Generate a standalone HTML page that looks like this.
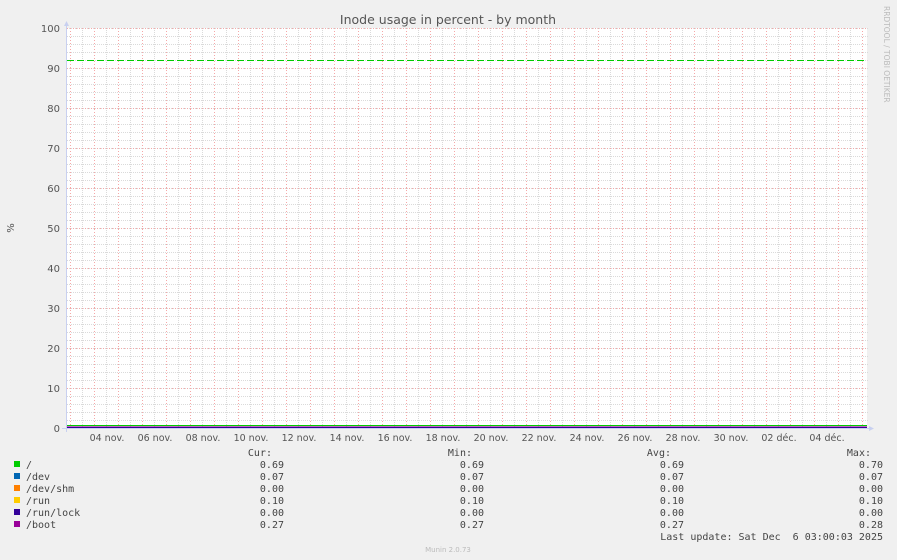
<!DOCTYPE html>
<html><head><style>
html,body{margin:0;padding:0;background:#f0f0f0;}
svg{display:block}
text{font-family:"DejaVu Sans","Liberation Sans",sans-serif;}
.m text, text.m{font-family:"DejaVu Sans Mono","Liberation Mono",monospace;font-size:10px;fill:#444;}
</style></head><body>
<svg width="897" height="560" xmlns="http://www.w3.org/2000/svg">
<defs>
<pattern id="hg" patternUnits="userSpaceOnUse" x="67" y="28" width="2" height="8"><rect x="0" y="0" width="1" height="1" fill="#dadada"/></pattern>
<pattern id="hr" patternUnits="userSpaceOnUse" x="67" y="28" width="3" height="40"><rect x="0" y="0" width="1" height="1" fill="#f5a8a8"/></pattern>
<pattern id="vg" patternUnits="userSpaceOnUse" x="82" y="28" width="24" height="2"><rect x="0" y="0" width="1" height="1" fill="#dadada"/></pattern>
<pattern id="vr" patternUnits="userSpaceOnUse" x="70" y="28" width="24" height="3"><rect x="0" y="0" width="1" height="1" fill="#f5a8a8"/></pattern>
</defs>
<rect width="897" height="560" fill="#f0f0f0"/>
<rect x="67" y="28" width="800" height="400" fill="#fff"/>
<rect x="67" y="28" width="801" height="400" fill="url(#hg)"/>
<rect x="67" y="28" width="800" height="400" fill="url(#vg)"/>
<rect x="67" y="28" width="801" height="401" fill="url(#hr)"/>
<rect x="67" y="28" width="800" height="400" fill="url(#vr)"/>
<line x1="67" y1="60.5" x2="867" y2="60.5" stroke="#00cc00" stroke-width="1" stroke-dasharray="7,3"/>
<line x1="67" y1="425.5" x2="867" y2="425.5" stroke="#00cc00"/>
<line x1="67" y1="427.5" x2="867" y2="427.5" stroke="#330099"/>
<line x1="67" y1="426.5" x2="867" y2="426.5" stroke="#990099" stroke-opacity="0.6"/>
<line x1="66.5" y1="24" x2="66.5" y2="432" stroke="#c8d0f0"/>
<line x1="62" y1="428.5" x2="870" y2="428.5" stroke="#c8d0f0"/>
<polygon points="64,26 69,26 66.5,21" fill="#c8d0f0"/>
<polygon points="869,426 869,431 874,428.5" fill="#c8d0f0"/>
<text x="448" y="24" font-size="12.5" fill="#555" text-anchor="middle">Inode usage in percent - by month</text>
<g font-size="10" fill="#555" text-anchor="end">
<text x="60" y="32">100</text><text x="60" y="72">90</text><text x="60" y="112">80</text><text x="60" y="152">70</text><text x="60" y="192">60</text><text x="60" y="232">50</text><text x="60" y="272">40</text><text x="60" y="312">30</text><text x="60" y="352">20</text><text x="60" y="392">10</text><text x="60" y="432">0</text>
</g>
<text transform="translate(14,228) rotate(-90)" font-size="10" fill="#555" text-anchor="middle">%</text>
<text transform="translate(884,6) rotate(90)" font-size="7.5" fill="#bbb">RRDTOOL / TOBI OETIKER</text>
<g font-size="9.5" fill="#555" text-anchor="middle">
<text x="107" y="441">04 nov.</text><text x="155" y="441">06 nov.</text><text x="203" y="441">08 nov.</text><text x="251" y="441">10 nov.</text><text x="299" y="441">12 nov.</text><text x="347" y="441">14 nov.</text><text x="395" y="441">16 nov.</text><text x="443" y="441">18 nov.</text><text x="491" y="441">20 nov.</text><text x="539" y="441">22 nov.</text><text x="587" y="441">24 nov.</text><text x="635" y="441">26 nov.</text><text x="683" y="441">28 nov.</text><text x="731" y="441">30 nov.</text><text x="779" y="441">02 déc.</text><text x="827" y="441">04 déc.</text>
</g>
<g class="m">
<text x="272" y="456" text-anchor="end">Cur:</text><text x="472" y="456" text-anchor="end">Min:</text><text x="671" y="456" text-anchor="end">Avg:</text><text x="871" y="456" text-anchor="end">Max:</text>
</g>
<rect x="14" y="461" width="6" height="6" fill="#00cc00"/>
<rect x="14" y="473" width="6" height="6" fill="#0066b3"/>
<rect x="14" y="485" width="6" height="6" fill="#ff8000"/>
<rect x="14" y="497" width="6" height="6" fill="#ffcc00"/>
<rect x="14" y="509" width="6" height="6" fill="#330099"/>
<rect x="14" y="521" width="6" height="6" fill="#990099"/>
<g class="m">
<text x="26" y="468">/</text><text x="26" y="480">/dev</text><text x="26" y="492">/dev/shm</text><text x="26" y="504">/run</text><text x="26" y="516">/run/lock</text><text x="26" y="528">/boot</text>
</g>
<g class="m" text-anchor="end">
<text x="284" y="468">0.69</text><text x="484" y="468">0.69</text><text x="684" y="468">0.69</text><text x="883" y="468">0.70</text>
<text x="284" y="480">0.07</text><text x="484" y="480">0.07</text><text x="684" y="480">0.07</text><text x="883" y="480">0.07</text>
<text x="284" y="492">0.00</text><text x="484" y="492">0.00</text><text x="684" y="492">0.00</text><text x="883" y="492">0.00</text>
<text x="284" y="504">0.10</text><text x="484" y="504">0.10</text><text x="684" y="504">0.10</text><text x="883" y="504">0.10</text>
<text x="284" y="516">0.00</text><text x="484" y="516">0.00</text><text x="684" y="516">0.00</text><text x="883" y="516">0.00</text>
<text x="284" y="528">0.27</text><text x="484" y="528">0.27</text><text x="684" y="528">0.27</text><text x="883" y="528">0.28</text>
<text x="883" y="540" xml:space="preserve">Last update: Sat Dec  6 03:00:03 2025</text>
</g>
<text x="448" y="552" font-size="7" fill="#bbb" text-anchor="middle">Munin 2.0.73</text>
</svg>
</body></html>
